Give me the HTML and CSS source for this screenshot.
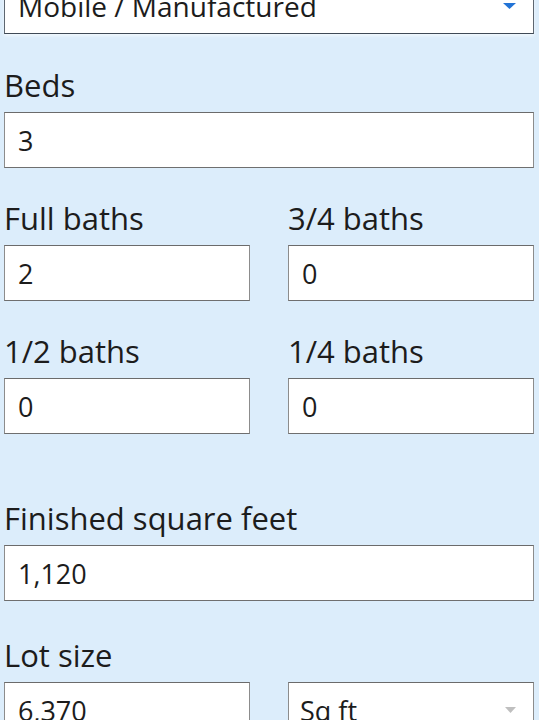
FILE: index.html
```html
<!DOCTYPE html>
<html lang="en">
<head>
<meta charset="utf-8">
<title>Home facts</title>
<link rel="stylesheet" href="styles.css">
</head>
<body>
<form class="form">
  <div class="select select-top">
    <span class="select-text">Mobile / Manufactured</span>
    <svg class="arrow arrow-blue" width="13" height="6" viewBox="0 0 13 6"><path d="M0 0H13L6.5 6Z"/></svg>
  </div>

  <div class="field f-beds">
    <label class="label">Beds</label>
    <input class="input" type="text" value="3">
  </div>

  <div class="pair f-std">
    <div class="field">
      <label class="label">Full baths</label>
      <input class="input" type="text" value="2">
    </div>
    <div class="field">
      <label class="label">3/4 baths</label>
      <input class="input" type="text" value="0">
    </div>
  </div>

  <div class="pair f-std">
    <div class="field">
      <label class="label">1/2 baths</label>
      <input class="input" type="text" value="0">
    </div>
    <div class="field">
      <label class="label">1/4 baths</label>
      <input class="input" type="text" value="0">
    </div>
  </div>

  <div class="field f-finished">
    <label class="label">Finished square feet</label>
    <input class="input" type="text" value="1,120">
  </div>

  <div class="field f-lot">
    <label class="label">Lot size</label>
    <div class="pair">
      <input class="input" type="text" value="6,370">
      <div class="select">
        <span class="select-text">Sq ft</span>
        <svg class="arrow arrow-grey" width="11" height="6" viewBox="0 0 11 6"><path d="M0 0H11L5.5 6Z"/></svg>
      </div>
    </div>
  </div>
</form>
</body>
</html>
```

FILE: styles.css
```css
html, body {
  margin: 0;
  padding: 0;
  background: #dcedfb;
  overflow: hidden;
}

body {
  font-family: "Open Sans", "Noto Sans", sans-serif;
  color: #1c1c1c;
}

.form {
  padding: 0 5px 0 4px;
  display: flex;
  flex-direction: column;
}

.field {
  display: flex;
  flex-direction: column;
}

.pair {
  display: grid;
  grid-template-columns: 1fr 1fr;
  column-gap: 38px;
}

.label {
  font-size: 31px;
  line-height: 42px;
  margin: 0 0 6px 0;
}

.input,
.select {
  box-sizing: border-box;
  width: 100%;
  height: 56px;
  margin: 0;
  background: #fff;
  border: 1px solid #8c8c8c;
  border-top-color: #6b6b6b;
  border-bottom-color: #6f6f6f;
  border-radius: 0;
  font-family: "Open Sans", "Noto Sans", sans-serif;
  font-size: 27px;
  color: #1c1c1c;
  padding: 0 12px 0 13px;
  outline: none;
  -webkit-appearance: none;
  appearance: none;
}

.select {
  display: flex;
  align-items: center;
  justify-content: space-between;
  padding: 0 17px 0 11px;
}

.select-top {
  margin-top: -22px;
  border-color: #5d6670;
  border-top-color: #5d6670;
  border-bottom-color: #3f4a56;
  box-shadow: 0 2px 3px rgba(255, 255, 255, 0.6);
  padding-left: 13px;
}

.select-top .select-text {
  font-size: 28px;
}

.f-beds { margin-top: 30px; }
.f-std { margin-top: 29px; }
.f-finished { margin-top: 63px; }
.f-lot { margin-top: 33px; }

.arrow-blue { fill: #2273d6; }
.arrow-grey { fill: #bfbfbf; }
```
